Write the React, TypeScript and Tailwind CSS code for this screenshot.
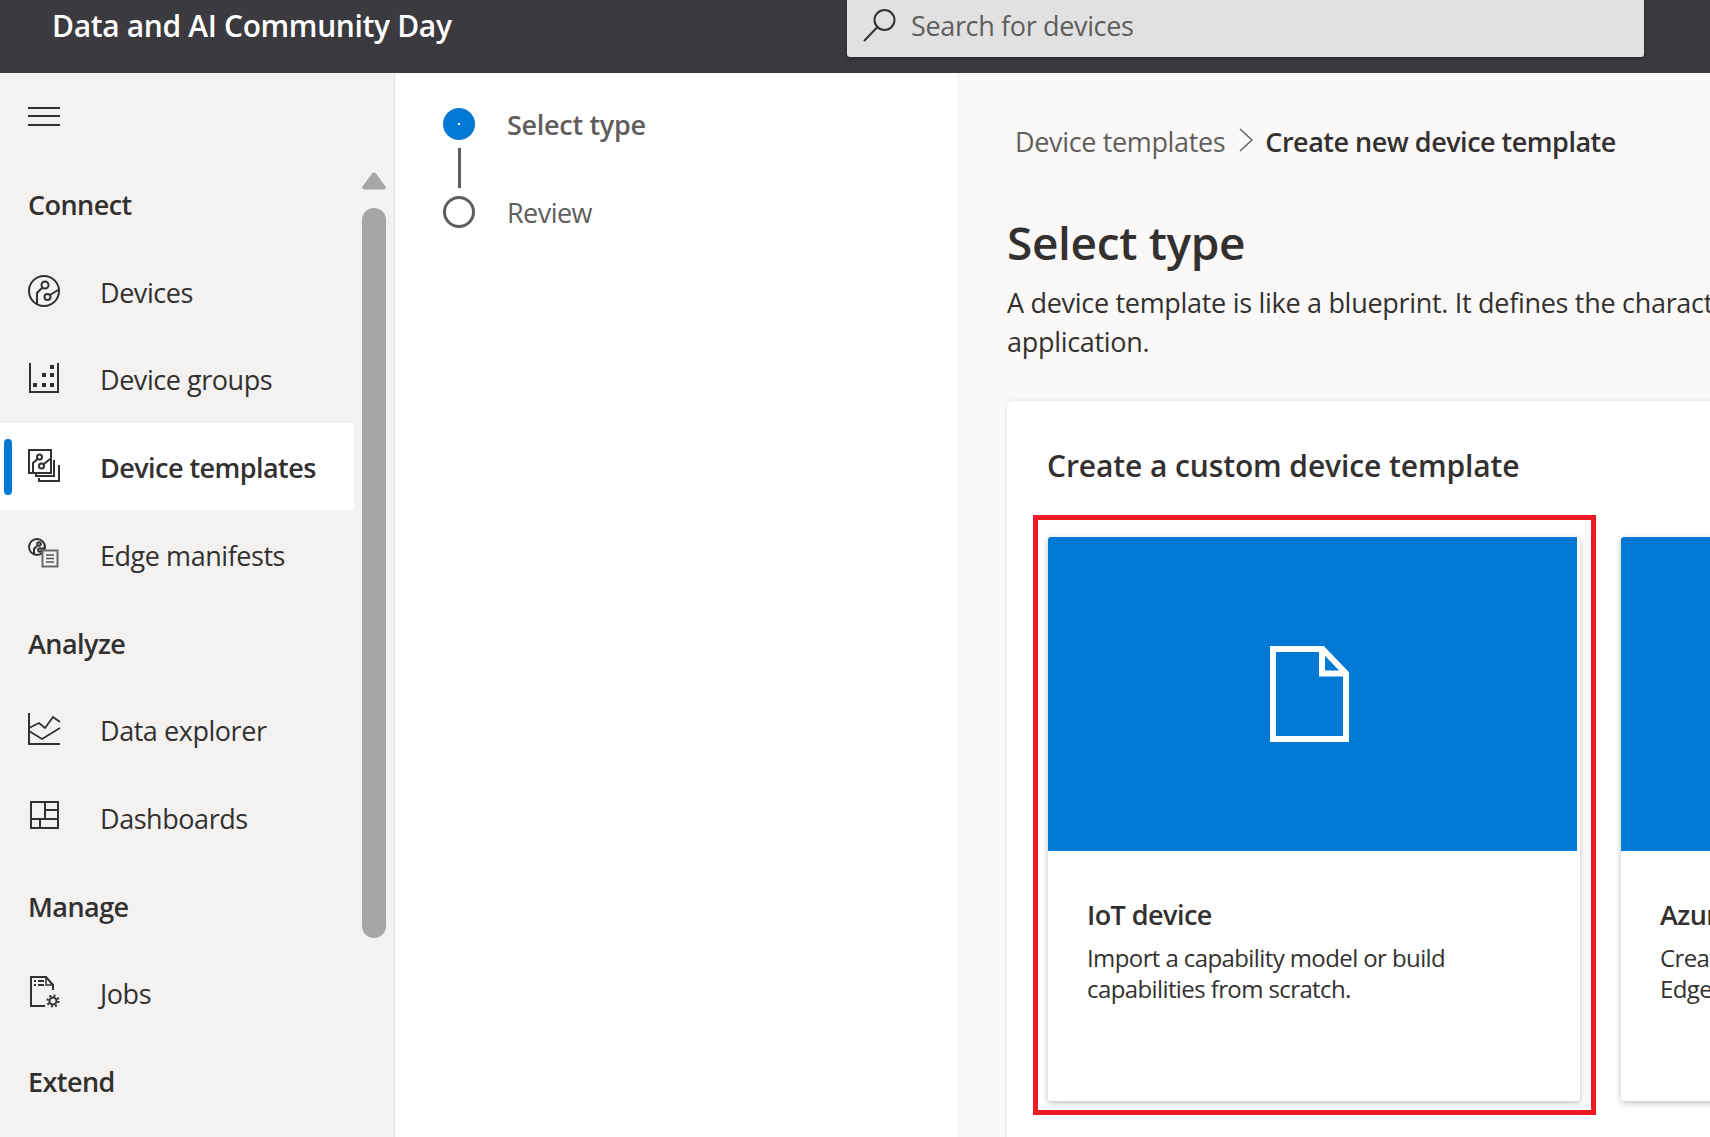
import React from "react";

const font = { fontFamily: '"Open Sans", "Noto Sans", sans-serif' };
const S = "#323130";

const DevicesIcon = () => (
  <svg width="34" height="34" viewBox="0 0 34 34" fill="none" stroke={S} strokeWidth="2">
    <circle cx="17" cy="17" r="15" />
    <circle cx="18" cy="11" r="3.5" />
    <circle cx="20.5" cy="23" r="3" />
    <path d="M15.5 13.5 10 19v11M23 21l8-5" />
  </svg>
);
const GroupsIcon = () => (
  <svg width="34" height="34" viewBox="0 0 34 34" fill="none" stroke={S} strokeWidth="2">
    <path d="M3 2v29h28V2" />
    <g fill={S} stroke="none">
      <rect x="23" y="4" width="4" height="4" />
      <rect x="15" y="12" width="4" height="4" />
      <rect x="23" y="12" width="4" height="4" />
      <rect x="6" y="22" width="4" height="4" />
      <rect x="15" y="22" width="4" height="4" />
      <rect x="23" y="22" width="4" height="4" />
    </g>
  </svg>
);
const TemplatesIcon = () => (
  <svg width="34" height="34" viewBox="0 0 34 34" fill="none" stroke={S} strokeWidth="2">
    <rect x="2" y="1" width="22" height="23" />
    <circle cx="12.5" cy="8" r="2.5" />
    <circle cx="14.5" cy="17" r="2.5" />
    <path d="M10.5 10 6 14v9M17 15l6-5" />
    <path d="M27 11v16H9v-3M32 16v16H12v-3" />
  </svg>
);
const EdgeIcon = () => (
  <svg width="34" height="34" viewBox="0 0 34 34" fill="none" stroke={S} strokeWidth="2">
    <circle cx="10" cy="10" r="8" />
    <circle cx="12" cy="7" r="1.8" />
    <circle cx="13" cy="13" r="1.8" />
    <path d="M10 9 7 12v5M15 12l3-2" />
    <rect x="15.5" y="13.5" width="15" height="16" fill="#f3f2f1" stroke="#6b6a69" />
    <path d="M19 18h8M19 21.5h8M19 25h8" strokeWidth="1.5" stroke="#555" />
  </svg>
);
const ExplorerIcon = () => (
  <svg width="34" height="34" viewBox="0 0 34 34" fill="none" stroke={S} strokeWidth="2">
    <path d="M2 1v31h31" />
    <path d="M2 16l10-5 6 5 8-11 7 5" strokeWidth="1.7" />
    <path d="M2 19l13 8 18-11" strokeWidth="1.7" />
  </svg>
);
const DashIcon = () => (
  <svg width="34" height="34" viewBox="0 0 34 34" fill="none" stroke={S} strokeWidth="2">
    <path d="M4 2h27v26H4zM4 19h27M18 2v17M18 10h13M13 19v9" />
  </svg>
);
const JobsIcon = () => (
  <svg width="34" height="34" viewBox="0 0 34 34" fill="none" stroke={S} strokeWidth="2">
    <path d="M18 31H4V2h15l7 8v5" />
    <path d="M19 2v8h7" strokeWidth="1.5" />
    <path d="M7 6h2M11 6h6M7 10h2M11 10h6" strokeWidth="1.8" />
    <circle cx="26" cy="26" r="3.5" />
    <circle cx="26" cy="26" r="5.5" strokeWidth="2.2" strokeDasharray="2 2.3" />
  </svg>
);

const Item = ({ icon, label, active }: { icon: React.ReactNode; label: string; active?: boolean }) => (
  <div className={`h-[87.7px] w-[354px] flex items-center relative ${active ? "bg-white" : ""}`}>
    {active && <div className="absolute left-[4px] top-[16px] h-[56px] w-[8px] rounded-full bg-[#0078d4]" />}
    <div className="w-[100px] pl-[27px] flex items-center shrink-0 -mt-[1px]">{icon}</div>
    <span className={`mt-[4px] text-[27px] text-[#323130] ${active ? "font-semibold tracking-[-0.55px]" : "tracking-[-0.45px]"}`}>{label}</span>
  </div>
);
const Heading = ({ label }: { label: string }) => (
  <div className="h-[87.7px] w-[354px] flex items-center pl-[28px]">
    <span className="mt-[4px] text-[27px] font-semibold tracking-[-0.55px] text-[#323130]">{label}</span>
  </div>
);

const Tile = ({ children }: { children: React.ReactNode }) => (
  <div className="w-[532px] h-[564px] bg-white rounded-[3px] shadow-[0_2px_6px_rgba(0,0,0,0.25)] shrink-0 overflow-hidden">
    {children}
  </div>
);

export default function App() {
  return (
    <div className="h-[1137px] w-[1710px] flex flex-col overflow-hidden bg-white" style={font}>
      <header className="h-[73px] bg-[#3b3a3f] flex shrink-0">
        <div className="w-[847px] pl-[52px] pt-[4px] shrink-0">
          <span className="text-[30px] font-semibold text-white tracking-[-0.35px] leading-[44px]">
            Data and AI Community Day
          </span>
        </div>
        <div className="w-[797px] h-[57px] bg-[#e1e1e1] rounded-b-[3px] flex items-center pl-[16px] gap-[15px] shadow-[0_2px_4px_rgba(0,0,0,0.3)]">
          <svg width="33" height="33" viewBox="0 0 33 33" fill="none" stroke={S} strokeWidth="2" className="-mt-[6px]">
            <circle cx="21.5" cy="11" r="10" />
            <path d="M14 18.5 1 32" />
          </svg>
          <span className="text-[27px] text-[#605e5c] tracking-[-0.35px] -mt-[5px]">Search for devices</span>
        </div>
      </header>
      <div className="flex flex-1 min-h-0">
        <aside className="w-[395px] shrink-0 bg-[#f3f2f1] border-r border-[#e1dfdd] flex overflow-hidden">
          <nav className="w-[354px] shrink-0">
            <div className="h-[86.5px] flex flex-col justify-center pl-[28px] gap-[6.5px]">
              <div className="w-[32px] h-[2px] bg-[#323130]" />
              <div className="w-[32px] h-[2px] bg-[#323130]" />
              <div className="w-[32px] h-[2px] bg-[#323130]" />
            </div>
            <Heading label="Connect" />
            <Item icon={<DevicesIcon />} label="Devices" />
            <Item icon={<GroupsIcon />} label="Device groups" />
            <Item icon={<TemplatesIcon />} label="Device templates" active />
            <Item icon={<EdgeIcon />} label="Edge manifests" />
            <Heading label="Analyze" />
            <Item icon={<ExplorerIcon />} label="Data explorer" />
            <Item icon={<DashIcon />} label="Dashboards" />
            <Heading label="Manage" />
            <Item icon={<JobsIcon />} label="Jobs" />
            <Heading label="Extend" />
          </nav>
          <div className="ml-[8px] w-[24px] pt-[99px] flex flex-col items-center">
            <svg width="24" height="18" viewBox="0 0 24 18" fill="#a6a6a6">
              <path d="M10 1.5a2.6 2.6 0 0 1 4 0l9.4 13c.9 1.4.2 3-1.6 3H2.2C.4 17.5-.3 15.900.6 14.500z" />
            </svg>
            <div className="mt-[18px] h-[730px] w-[24px] rounded-full bg-[#a6a6a6]" />
          </div>
        </aside>

        <div className="w-[564px] shrink-0 bg-white border-r border-[#edebe9] pt-[35px] pl-[48px]">
          <div className="flex items-center h-[32px]">
            <div className="w-[32px] h-[32px] rounded-full bg-[#0078d4] flex items-center justify-center">
              <div className="w-[2px] h-[2px] bg-white" />
            </div>
            <span className="ml-[32px] mt-[2px] text-[27px] font-semibold text-[#605e5c] tracking-[-0.3px]">Select type</span>
          </div>
          <div className="ml-[14.5px] mt-[8px] w-[3px] h-[40px] bg-[#605e5c]" />
          <div className="mt-[8px] flex items-center h-[32px]">
            <div className="w-[32px] h-[32px] rounded-full border-[3px] border-[#605e5c]" />
            <span className="ml-[32px] mt-[2px] text-[27px] text-[#605e5c] tracking-[-0.55px]">Review</span>
          </div>
        </div>

        <main className="flex-1 min-w-0 bg-[#faf9f8] overflow-hidden pl-[48px]">
          <div className="flex items-center h-[40px] mt-[49px] ml-[8px] whitespace-nowrap">
            <span className="text-[27px] text-[#605e5c] tracking-[-0.35px]">Device templates</span>
            <svg width="14" height="24" viewBox="0 0 14 24" fill="none" stroke="#605e5c" strokeWidth="1.5" className="ml-[14px] -mt-[4px]">
              <path d="M1 1l12 11L1 23" />
            </svg>
            <span className="ml-[12px] text-[27px] font-semibold text-[#323130] tracking-[-0.5px]">Create new device template</span>
          </div>
          <h1 className="mt-[49px] text-[46px] leading-[62px] font-semibold text-[#323130] tracking-[-0.35px]">Select type</h1>
          <p className="mt-[10px] text-[27px] leading-[39px] text-[#323130] whitespace-nowrap tracking-[-0.3px]">
            A device template is like a blueprint. It defines the characteristics and behaviors of a device that connects to an
            <br />
            application.
          </p>
          <section className="mt-[40px] w-[1000px] h-[800px] bg-white rounded-[6px] shadow-[0_0_4px_rgba(0,0,0,0.12)] pl-[26px]">
            <h2 className="pl-[14px] pt-[43px] text-[30px] leading-[44px] font-semibold text-[#323130] tracking-[-0.1px]">
              Create a custom device template
            </h2>
            <div className="flex mt-[27px]">
              <div className="w-[563px] h-[600px] border-[5px] border-[#ed1c24] pl-[10px] pt-[17px] shrink-0">
                <Tile>
                  <div className="h-[314px] w-[529px] bg-[#0078d4] flex items-center justify-center">
                    <svg width="79" height="96" viewBox="0 0 79 96" fill="none" stroke="#fff" strokeWidth="6" className="-ml-[7px]">
                      <path d="M3 3h49.500L76 27.500V93H3z" />
                      <path d="M52 3v24.500h24" />
                    </svg>
                  </div>
                  <div className="pl-[39px] pt-[44px]">
                    <h3 className="text-[27px] leading-[40px] font-semibold text-[#323130] tracking-[-0.55px]">IoT device</h3>
                    <p className="mt-[7px] text-[24px] leading-[31px] text-[#323130] tracking-[-0.6px]">
                      Import a capability model or build
                      <br />
                      capabilities from scratch.
                    </p>
                  </div>
                </Tile>
              </div>
              <div className="ml-[25px] pt-[22px]">
                <Tile>
                  <div className="h-[314px] w-[529px] bg-[#0078d4]" />
                  <div className="pl-[39px] pt-[44px]">
                    <h3 className="text-[27px] leading-[40px] font-semibold text-[#323130] tracking-[-0.55px]">Azure IoT Edge</h3>
                    <p className="mt-[7px] text-[24px] leading-[31px] text-[#323130] tracking-[-0.6px]">
                      Create a template for Azure IoT
                      <br />
                      Edge devices.
                    </p>
                  </div>
                </Tile>
              </div>
            </div>
          </section>
        </main>
      </div>
    </div>
  );
}
